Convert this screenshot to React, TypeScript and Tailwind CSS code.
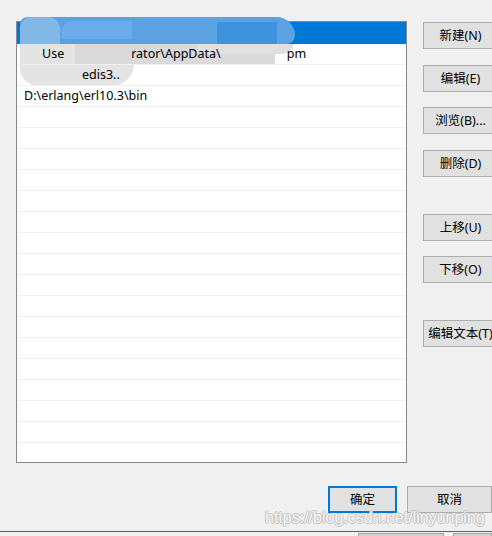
import React from "react";

const Btn = ({ label, className = "" }: { label: string; className?: string }) => (
  <div
    className={`flex h-[27px] w-[75px] shrink-0 items-center justify-center whitespace-nowrap border border-[#adadad] bg-[#e1e1e1] pt-[1px] text-[12.5px] text-black ${className}`}
  >
    {label}
  </div>
);

export default function App() {
  const rows = Array.from({ length: 16 });
  return (
    <div className="relative h-[536px] w-[492px] overflow-hidden bg-[#f0f0f0] font-['Noto_Sans','Noto_Sans_CJK_SC',sans-serif]">
      <div className="flex pl-[16px] pt-[21px]">
        {/* list box */}
        <div className="relative flex h-[442px] w-[391px] shrink-0 flex-col border border-[#828790] bg-white">
          {/* mosaic blur overlays (behind the row texts) */}
          <div className="absolute left-[3px] top-[22px] h-[42px] w-[114px] rounded-bl-[18px] rounded-br-[22px] bg-[#e4e4e4]" />
          <div className="absolute left-[58px] top-[22px] h-[20px] w-[200px] bg-[#dadada]" />
          <div className="absolute left-[180px] top-[18px] h-[14px] w-[98px] rounded-br-[14px] bg-[#e0e0e0]" />

          <div className="relative h-[22px] shrink-0 bg-[#0078d7]">
            <div className="absolute left-[3px] top-[-5px] h-[27px] w-[275px] rounded-tl-[12px] rounded-tr-[30px] rounded-br-[14px] bg-[#5aa2e2]" />
            <div className="absolute left-[3px] top-[-5px] h-[27px] w-[40px] rounded-t-[12px] bg-[#82b8e6]" />
            <div className="absolute left-[45px] top-[-1px] h-[18px] w-[70px] rounded-tl-[10px] bg-[#6dacea]" />
            <div className="absolute left-[200px] top-[0px] h-[22px] w-[60px] bg-[#3d93dd]" />
          </div>
          <div className="relative flex h-[21px] shrink-0 items-center border-b border-[#f0f0f0] pl-[7px] pt-[1px] text-[12.5px] text-black">
            <span className="ml-[18px]">Use</span>
            <span className="ml-[67px]">rator\AppData\</span>
            <span className="ml-[66px]">pm</span>
          </div>
          <div className="relative flex h-[21px] shrink-0 items-center border-b border-[#f0f0f0] pl-[7px] pt-[1px] text-[12.5px] text-black">
            <span className="ml-[58px]">edis3..</span>
          </div>
          <div className="flex h-[21px] shrink-0 items-center border-b border-[#f0f0f0] pl-[7px] pt-[1px] text-[12.5px] text-black">
            D:\erlang\erl10.3\bin
          </div>
          {rows.map((_, i) => (
            <div key={i} className="h-[21px] shrink-0 border-b border-[#f0f0f0]" />
          ))}
        </div>
        {/* buttons */}
        <div className="ml-[16px] flex flex-col pt-[1px]">
          <Btn label="新建(N)" />
          <Btn label="编辑(E)" className="mt-[16px]" />
          <Btn label="浏览(B)..." className="mt-[15px]" />
          <Btn label="删除(D)" className="mt-[16px]" />
          <Btn label="上移(U)" className="mt-[37px]" />
          <Btn label="下移(O)" className="mt-[15px]" />
          <Btn label="编辑文本(T)" className="mt-[37px]" />
        </div>
      </div>
      {/* bottom buttons */}
      <div className="mt-[23px] flex pl-[328px]">
        <div className="flex h-[27px] w-[85px] items-center justify-center border-2 border-[#0078d7] bg-[#e1e1e1] pt-[1px] text-[12.5px] text-black">
          确定
        </div>
        <Btn label="取消" className="ml-[10px] w-[85px]" />
      </div>
      <div className="absolute left-[265px] top-[508px] font-['Liberation_Sans',Arial,sans-serif] text-[16px] leading-[20px] text-[#f6f6f6] [text-shadow:1px_0_0_#c4c4c4,-1px_0_0_#c4c4c4,0_1px_0_#c4c4c4,0_-1px_0_#c4c4c4]">
        https://blog.csdn.net/linyunping
      </div>
      <div className="absolute left-0 top-[531px] h-[1px] w-full bg-[#0078d7]" />
      <div className="absolute left-[358px] top-[533px] h-[3px] w-[86px] border border-b-0 border-[#a8a8a8] bg-[#d0d0d0]" />
      <div className="absolute left-[453px] top-[533px] h-[3px] w-[39px] border border-b-0 border-[#a8a8a8] bg-[#d0d0d0]" />
    </div>
  );
}
